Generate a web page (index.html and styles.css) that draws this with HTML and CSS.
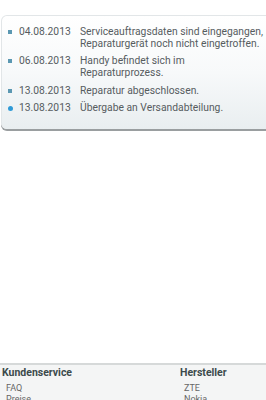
FILE: index.html
```html
<!DOCTYPE html>
<html>
<head>
<meta charset="utf-8">
<link rel="stylesheet" href="styles.css">
</head>
<body>
<div class="page">
  <div class="card">
    <ul class="status">
      <li class="row"><span class="dot"></span><span class="date">04.08.2013</span><span class="text">Serviceauftragsdaten sind eingegangen,<br>Reparaturgerät noch nicht eingetroffen.</span></li>
      <li class="row"><span class="dot"></span><span class="date">06.08.2013</span><span class="text">Handy befindet sich im<br>Reparaturprozess.</span></li>
      <li class="row spaced"><span class="dot"></span><span class="date">13.08.2013</span><span class="text">Reparatur abgeschlossen.</span></li>
      <li class="row current"><span class="dot"></span><span class="date">13.08.2013</span><span class="text">Übergabe an Versandabteilung.</span></li>
    </ul>
  </div>
  <div class="spacer"></div>
  <footer class="footer">
    <div class="col">
      <h3 class="fhead">Kundenservice</h3>
      <a class="flink">FAQ</a>
      <a class="flink">Preise</a>
    </div>
    <div class="col">
      <h3 class="fhead">Hersteller</h3>
      <a class="flink">ZTE</a>
      <a class="flink">Nokia</a>
    </div>
  </footer>
</div>
</body>
</html>
```

FILE: styles.css
```css
html, body {
  margin: 0;
  padding: 0;
  background: #fff;
  overflow: hidden;
}
body {
  font-family: Roboto, "Liberation Sans", sans-serif;
  width: 266px;
  height: 400px;
}
.page {
  display: flex;
  flex-direction: column;
  height: 400px;
}
.card {
  margin: 15px -12px 0 1px;
  border: 1px solid #e2e6e8;
  border-bottom: none;
  border-radius: 6px 0 0 6px;
  background: linear-gradient(#ffffff 0%, #f7f9fa 50%, #e9eef0 100%);
  box-shadow: 0 2px 0 #9a9ea0;
  padding: 10px 0 15px 0;
}
.status {
  list-style: none;
  margin: 0;
  padding: 0;
  display: flex;
  flex-direction: column;
  gap: 5px;
}
.row {
  display: grid;
  grid-template-columns: 6px 4px 7px 61px 1fr;
  font-size: 10.3px;
  line-height: 12px;
  color: #565c5f;
  white-space: nowrap;
}
.spaced {
  margin-top: 1px;
}
.dot {
  grid-column: 2;
  width: 4px;
  height: 4px;
  margin-top: 4px;
  background: #5b98b2;
}
.current .dot {
  border-radius: 50%;
  background: #2f9ad6;
  width: 5px;
  height: 5px;
  margin-left: -0.5px;
}
.date {
  grid-column: 4;
}
.text {
  grid-column: 5;
}
.spacer {
  flex: 1;
}
.footer {
  height: 37px;
  border-top: 2px solid #d6d9d9;
  background: #f4f5f5;
  display: grid;
  grid-template-columns: 178px 1fr;
  padding: 1px 0 0 2px;
  box-sizing: border-box;
}
.col {
  display: flex;
  flex-direction: column;
}
.fhead {
  margin: 0;
  font-size: 10.5px;
  font-weight: bold;
  line-height: 14px;
  color: #3c4a4c;
}
.flink {
  font-size: 9px;
  line-height: 11px;
  color: #666;
  padding-left: 4px;
}
.fhead + .flink {
  margin-top: 3px;
}
```
